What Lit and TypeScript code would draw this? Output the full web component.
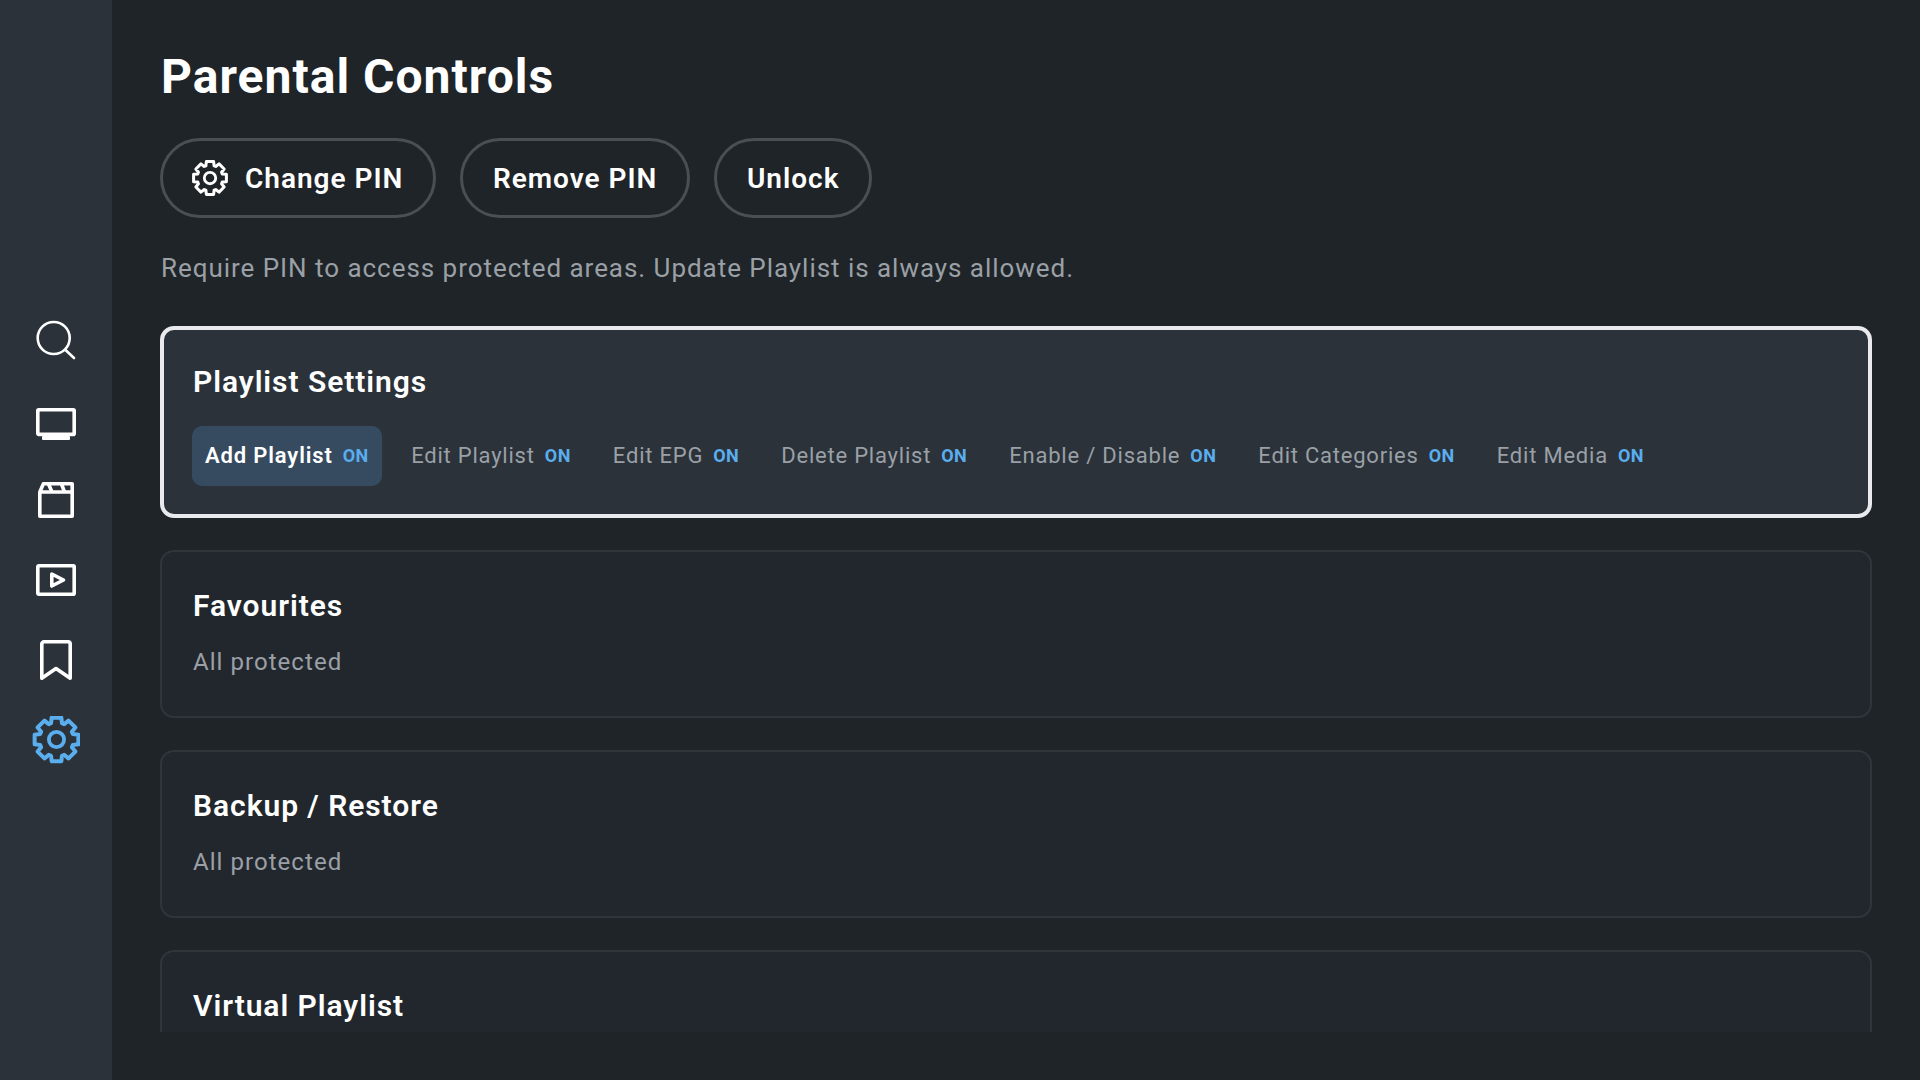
import { LitElement, html, css, svg } from "lit";
import { customElement } from "lit/decorators.js";

function gearPath(): string {
  const cx = 24, cy = 24, ro = 22.4, ri = 17.2, dO = 12.5, dR = 18.5;
  const pts: string[] = [];
  const pt = (r: number, deg: number) => {
    const a = ((deg - 90) * Math.PI) / 180;
    return `${(cx + r * Math.cos(a)).toFixed(2)} ${(cy + r * Math.sin(a)).toFixed(2)}`;
  };
  for (let i = 0; i < 8; i++) {
    const a = i * 45;
    pts.push(pt(ri, a - dR), pt(ro, a - dO), pt(ro, a + dO), pt(ri, a + dR));
  }
  return "M" + pts.join("L") + "z";
}

const GEAR = svg`<path d=${gearPath()} fill="none" stroke="currentColor" stroke-width="4" stroke-linejoin="round"/><circle cx="24" cy="24" r="7.6" fill="none" stroke="currentColor" stroke-width="3.8"/>`;

const chips = ["Add Playlist", "Edit Playlist", "Edit EPG", "Delete Playlist", "Enable / Disable", "Edit Categories", "Edit Media"];

@customElement("app-root")
export class AppRoot extends LitElement {
  static styles = css`
    :host { display: block; width: 1920px; height: 1080px; background: #1f2428; font-family: Roboto, "Liberation Sans", sans-serif; color: #fff; overflow: hidden; }
    .app { display: flex; height: 1080px; }
    .side { width: 112px; flex: none; background: #2b323a; display: flex; flex-direction: column; align-items: center; justify-content: center; }
    .nav { height: 80px; width: 112px; display: flex; align-items: center; justify-content: center; color: #fff; }
    .nav svg { width: 40px; height: 40px; display: block; }
    .nav.on { color: #5aaeee; }
    .nav.on svg { width: 48px; height: 48px; }
    .main { flex: 1; min-width: 0; padding: 48px 48px 48px; display: flex; flex-direction: column; overflow: hidden; }
    h1 { margin: 0 0 0 1px; font-size: 48px; line-height: 58px; font-weight: 700; letter-spacing: 1.02px; }
    .btns { display: flex; gap: 24px; margin-top: 32px; }
    .btn { height: 80px; box-sizing: border-box; border: 3px solid #4a4f54; border-radius: 40px; display: flex; align-items: center; gap: 17px; padding: 0 29.5px 0 30px; font-size: 28px; font-weight: 600; letter-spacing: 1px; }
    .btn svg { width: 36px; height: 36px; display: block; margin-left: -1px; }
    .desc { margin: 33px 0 0 1px; font-size: 26px; line-height: 34px; color: #9aa0a6; letter-spacing: 0.96px; }
    .list { margin-top: 41px; flex: 1; min-height: 0; overflow: hidden; display: flex; flex-direction: column; gap: 32px; }
    .card { flex: none; box-sizing: border-box; border: 2px solid #30353b; border-radius: 14px; background: #22272e; padding: 35px 31px 0; height: 168px; }
    .card.on { height: 192px; border: 4px solid #e8eaed; background: #2b323a; padding: 33px 29px 0; }
    h2 { margin: 0; font-size: 30px; line-height: 38px; font-weight: 600; letter-spacing: 0.95px; }
    .sub { margin-top: 21px; font-size: 24px; line-height: 32px; color: #9aa0a6; letter-spacing: 1.05px; }
    .chips { display: flex; gap: 16px; margin: 25px 0 0 -1px; }
    .chip { height: 60px; box-sizing: border-box; border-radius: 10px; display: flex; align-items: center; gap: 10px; padding: 0 13px 2px; font-size: 22px; color: #9aa0a6; letter-spacing: 0.78px; white-space: nowrap; }
    .chip.on { background: #364b60; color: #fff; font-weight: 600; letter-spacing: 0.85px; margin-right: 0.4px; }
    .chip b { font-size: 18px; font-weight: 700; color: #5aaeee; letter-spacing: 0.5px; }
  `;

  private icons = [
    svg`<circle cx="17.7" cy="18" r="16" fill="none" stroke="currentColor" stroke-width="2.6"/><path d="M29.5 30l8.5 8" fill="none" stroke="currentColor" stroke-width="2.6" stroke-linecap="round"/>`,
    svg`<rect x="1.8" y="9.8" width="36.4" height="24.6" rx="1" fill="none" stroke="currentColor" stroke-width="3.6"/><rect x="6" y="36" width="28" height="4" rx="1" fill="currentColor"/>`,
    svg`<path d="M3.8 12h32.4v24.2H3.8zM3.8 12l3.6-8.2h28.8V12" fill="none" stroke="currentColor" stroke-width="3.6" stroke-linejoin="round"/><path d="M12.5 4l3.5 8M25.5 4l3 8" fill="none" stroke="currentColor" stroke-width="3.6"/>`,
    svg`<rect x="1.8" y="5.8" width="36.4" height="28.4" rx="1" fill="none" stroke="currentColor" stroke-width="3.6"/><path d="M15.8 14L27.5 20 15.8 26z" fill="none" stroke="currentColor" stroke-width="3.6" stroke-linejoin="round"/>`,
    svg`<path d="M5.8 38.2V4a2.2 2.2 0 0 1 2.2-2.2h24a2.2 2.2 0 0 1 2.2 2.2v34.2L20 28.5z" fill="none" stroke="currentColor" stroke-width="3.6" stroke-linejoin="round"/>`,
  ];

  render() {
    return html`<div class="app">
      <nav class="side">
        ${this.icons.map((i) => html`<div class="nav"><svg viewBox="0 0 40 40">${i}</svg></div>`)}
        <div class="nav on"><svg viewBox="-0.5 0.5 48 48">${GEAR}</svg></div>
      </nav>
      <main class="main">
        <h1>Parental Controls</h1>
        <div class="btns">
          <div class="btn"><svg viewBox="0 0 48 48">${GEAR}</svg>Change PIN</div>
          <div class="btn">Remove PIN</div>
          <div class="btn">Unlock</div>
        </div>
        <p class="desc">Require PIN to access protected areas. Update Playlist is always allowed.</p>
        <div class="list">
          <section class="card on">
            <h2>Playlist Settings</h2>
            <div class="chips">
              ${chips.map((c, i) => html`<div class="chip ${i === 0 ? "on" : ""}">${c}<b>ON</b></div>`)}
            </div>
          </section>
          <section class="card"><h2>Favourites</h2><div class="sub">All protected</div></section>
          <section class="card"><h2>Backup / Restore</h2><div class="sub">All protected</div></section>
          <section class="card"><h2>Virtual Playlist</h2></section>
        </div>
      </main>
    </div>`;
  }
}
